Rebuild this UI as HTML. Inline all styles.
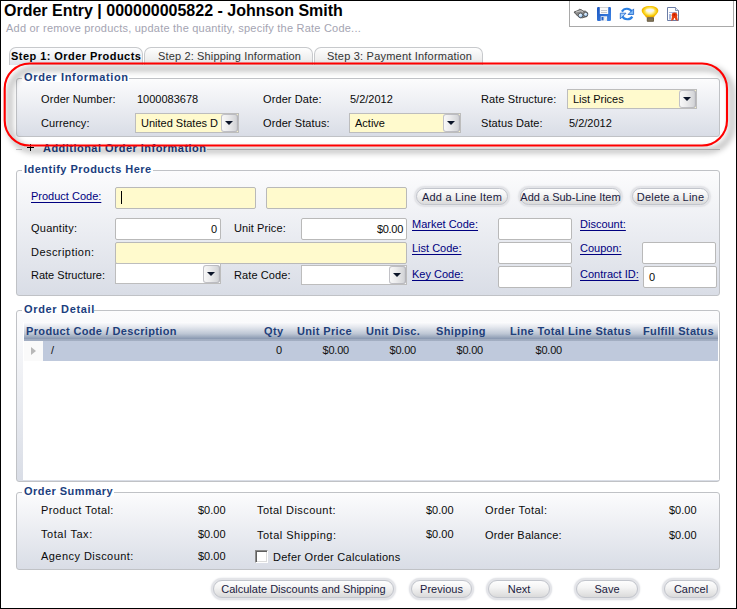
<!DOCTYPE html><html><head><meta charset="utf-8"><style>
*{margin:0;padding:0;box-sizing:border-box}
html,body{width:737px;height:609px;overflow:hidden;background:#fff}
body{position:relative;font-family:"Liberation Sans", sans-serif;font-size:11px;color:#000}
.frame{position:absolute;left:0;top:0;width:737px;height:609px;border:1px solid #000;z-index:50;pointer-events:none}
.t{position:absolute;white-space:nowrap;font-size:11px;line-height:13px;color:#0a0a0a;letter-spacing:0.1px}
.lk{position:absolute;white-space:nowrap;font-size:11px;line-height:13px;color:#000080;text-decoration:underline;text-underline-offset:2px}
.fs{position:absolute;border:1px solid #c0c2c6;border-radius:3px;background:linear-gradient(#fcfcfd,#d9dde6)}
.lgbg{position:absolute;background:#fff}
.lg{position:absolute;white-space:nowrap;font-size:11px;line-height:13px;font-weight:bold;color:#1b3e7e}
.in{position:absolute;border:1px solid #b9b9b9;border-radius:2px;overflow:hidden}
.in.cb{border-radius:0;border-color:#bdbdbd}
.ct{position:absolute;white-space:nowrap;font-size:11px;line-height:13px;color:#0a0a0a}
.cbtn{position:absolute;right:0;border-radius:3px;background:linear-gradient(90deg,#fafafa 0%,#ececed 40%,#d6d7da 85%,#c2c3c7 100%);box-shadow:inset 0 0 0 1px rgba(175,175,182,0.75)}
.tri{position:absolute;width:0;height:0;border-left:4px solid transparent;border-right:4px solid transparent;border-top:4.5px solid #0b1428}
.bt{position:absolute;border-radius:11px;background:#e3e4e8;box-shadow:0 0 1.5px 0.5px #ecedf0}
.bti{position:absolute;left:2px;top:2px;right:2px;bottom:2px;border:1px solid #c2c5cc;border-radius:9px;background:linear-gradient(#fefefe 0%,#f4f4f4 40%,#e3e3e3 80%,#dadada 100%)}
.btt{position:absolute;width:100%;text-align:center;font-size:11px;line-height:13px;color:#1b1b40;white-space:nowrap}
.gh{position:absolute;white-space:nowrap;font-size:11px;line-height:13px;font-weight:bold;color:#1f3f7a;letter-spacing:0.35px}
.gd{position:absolute;white-space:nowrap;font-size:11px;line-height:13px;color:#111;text-align:right;letter-spacing:-0.2px}
.tab{position:absolute;border:1px solid #c7c9cc;border-bottom:none;border-radius:7px 7px 0 0;background:linear-gradient(#fefefe,#e6e6e6);font-size:11px;line-height:13px;white-space:nowrap;color:#333}
</style></head><body>
<div class="frame"></div>
<div style="position:absolute;left:4px;top:2px;font-size:16px;line-height:18px;font-weight:bold;color:#000;white-space:nowrap">Order Entry | 000000005822 - Johnson Smith</div>
<div style="position:absolute;left:6px;top:22px;font-size:11px;line-height:13px;color:#a4a4b2;white-space:nowrap;letter-spacing:0.22px">Add or remove products, update the quantity, specify the Rate Code...</div>
<div style="position:absolute;left:569px;top:-1px;width:165px;height:28px;border:1px solid #a9a9a9"></div>
<div class="tab" style="left:9px;top:47px;width:134px;height:18px;background:linear-gradient(#fdfdfe,#dfe4ec)"><div style="position:absolute;left:1px;top:2px;font-weight:bold;color:#000;letter-spacing:0.45px">Step 1: Order Products</div></div>
<div class="tab" style="left:144px;top:47px;width:169px;height:18px"><div style="position:absolute;left:13px;top:2px;color:#333;letter-spacing:0.15px">Step 2: Shipping Information</div></div>
<div class="tab" style="left:314px;top:47px;width:169px;height:18px"><div style="position:absolute;left:12px;top:2px;color:#333;letter-spacing:0.21px">Step 3: Payment Information</div></div>
<div class="fs" style="left:16px;top:78px;width:704px;height:59px;"></div>
<div class="lgbg" style="left:22px;top:74px;width:107px;height:8px"></div>
<div class="lg" style="left:24px;top:71px;letter-spacing:0.66px">Order Information</div>
<div class="t" style="left:41px;top:93px;">Order Number:</div>
<div class="t" style="left:137px;top:93px;letter-spacing:0">1000083678</div>
<div class="t" style="left:263px;top:93px;">Order Date:</div>
<div class="t" style="left:350px;top:93px;letter-spacing:0">5/2/2012</div>
<div class="t" style="left:481px;top:93px;">Rate Structure:</div>
<div class="in cb" style="left:567px;top:89px;width:130px;height:20px;background:#fffacd"><div class="ct" style="left:5px;top:3px">List Prices</div><div class="cbtn" style="top:0px;width:17px;height:18px"><div class="tri" style="left:4px;top:7px"></div></div></div>
<div class="t" style="left:41px;top:117px;">Currency:</div>
<div class="in cb" style="left:135px;top:113px;width:104px;height:20px;background:#fffacd"><div class="ct" style="left:5px;top:3px">United States D</div><div class="cbtn" style="top:0px;width:17px;height:18px"><div class="tri" style="left:4px;top:7px"></div></div></div>
<div class="t" style="left:263px;top:117px;">Order Status:</div>
<div class="in cb" style="left:349px;top:113px;width:112px;height:20px;background:#fffacd"><div class="ct" style="left:5px;top:3px">Active</div><div class="cbtn" style="top:0px;width:17px;height:18px"><div class="tri" style="left:4px;top:7px"></div></div></div>
<div class="t" style="left:481px;top:117px;">Status Date:</div>
<div class="t" style="left:569px;top:117px;letter-spacing:0">5/2/2012</div>
<div style="position:absolute;left:16px;top:149px;width:704px;height:1px;background:#c9cacd"></div>
<div style="position:absolute;left:22px;top:143px;width:185px;height:12px;background:#fff"></div>
<div style="position:absolute;left:27px;top:147px;width:7px;height:1px;background:#000"></div><div style="position:absolute;left:30px;top:144px;width:1px;height:7px;background:#000"></div>
<div class="lg" style="left:43px;top:142px;letter-spacing:0.47px">Additional Order Information</div>
<div class="fs" style="left:16px;top:170px;width:704px;height:126px;"></div>
<div class="lgbg" style="left:22px;top:166px;width:131px;height:8px"></div>
<div class="lg" style="left:24px;top:163px;letter-spacing:0.47px">Identify Products Here</div>
<div class="lk" style="left:31px;top:190px;">Product Code:</div>
<div class="in" style="left:115px;top:187px;width:141px;height:22px;background:#fffacd;"><div style="position:absolute;left:5px;top:3px;width:1px;height:13px;background:#000"></div></div>
<div class="in" style="left:266px;top:187px;width:141px;height:22px;background:#fffacd;"></div>
<div class="bt" style="left:414px;top:186px;width:96px;height:21px"><div class="bti"></div><div class="btt" style="top:5px;left:0px;letter-spacing:0.2px">Add a Line Item</div></div>
<div class="bt" style="left:518px;top:186px;width:105px;height:21px"><div class="bti"></div><div class="btt" style="top:5px;left:0px;letter-spacing:0px">Add a Sub-Line Item</div></div>
<div class="bt" style="left:630px;top:186px;width:81px;height:21px"><div class="bti"></div><div class="btt" style="top:5px;left:0px;letter-spacing:0.2px">Delete a Line</div></div>
<div class="t" style="left:31px;top:222px;letter-spacing:0.24px">Quantity:</div>
<div class="in" style="left:115px;top:218px;width:106px;height:22px;background:#fff;"><div class="ct" style="right:3px;top:4px">0</div></div>
<div class="t" style="left:234px;top:222px;">Unit Price:</div>
<div class="in" style="left:301px;top:218px;width:106px;height:22px;background:#fff;"><div class="ct" style="right:3px;top:4px;letter-spacing:-0.3px">$0.00</div></div>
<div class="lk" style="left:412px;top:218px;">Market Code:</div>
<div class="in" style="left:498px;top:218px;width:74px;height:22px;background:#fff;"></div>
<div class="lk" style="left:580px;top:218px;">Discount:</div>
<div class="t" style="left:31px;top:246px;letter-spacing:0.45px">Description:</div>
<div class="in" style="left:115px;top:242px;width:292px;height:22px;background:#fffacd;"></div>
<div class="lk" style="left:412px;top:242px;">List Code:</div>
<div class="in" style="left:498px;top:242px;width:74px;height:22px;background:#fff;"></div>
<div class="lk" style="left:580px;top:242px;">Coupon:</div>
<div class="in" style="left:642px;top:242px;width:74px;height:22px;background:#fff;"></div>
<div class="t" style="left:31px;top:269px;letter-spacing:0">Rate Structure:</div>
<div class="in cb" style="left:115px;top:263px;width:106px;height:21px;background:#fff"><div class="cbtn" style="top:1px;width:17px;height:18px"><div class="tri" style="left:4px;top:7px"></div></div></div>
<div class="t" style="left:234px;top:269px;">Rate Code:</div>
<div class="in cb" style="left:301px;top:265px;width:106px;height:20px;background:#fff"><div class="cbtn" style="top:0px;width:17px;height:18px"><div class="tri" style="left:4px;top:7px"></div></div></div>
<div class="lk" style="left:412px;top:268px;">Key Code:</div>
<div class="in" style="left:498px;top:266px;width:74px;height:22px;background:#fff;"></div>
<div class="lk" style="left:580px;top:268px;">Contract ID:</div>
<div class="in" style="left:643px;top:266px;width:74px;height:22px;background:#fff;"><div class="ct" style="left:5px;top:4px">0</div></div>
<div class="fs" style="left:16px;top:310px;width:704px;height:172px;"></div>
<div class="lgbg" style="left:22px;top:306px;width:72px;height:8px"></div>
<div class="lg" style="left:24px;top:303px;letter-spacing:0.67px">Order Detail</div>
<div style="position:absolute;left:23px;top:322px;width:696px;height:158px;background:#fff"></div>
<div style="position:absolute;left:24px;top:322px;width:694px;height:19px;background:linear-gradient(#fdfdfe 0%,#e6e9ef 25%,#bdc6d4 62%,#8a99b1 88%,#9fabbf 88%,#a3aec2 100%)"></div>
<div style="position:absolute;left:24px;top:341px;width:694px;height:20px;background:#bfc9dc"></div>
<div style="position:absolute;left:24px;top:341px;width:19px;height:20px;background:#fafafa"></div>
<div class="gh" style="left:26px;top:325px">Product Code / Description</div>
<div class="gh" style="left:264px;top:325px">Qty</div>
<div class="gh" style="left:297px;top:325px">Unit Price</div>
<div class="gh" style="left:366px;top:325px">Unit Disc.</div>
<div class="gh" style="left:436px;top:325px">Shipping</div>
<div class="gh" style="left:510px;top:325px">Line Total</div>
<div class="gh" style="left:568px;top:325px">Line Status</div>
<div class="gh" style="left:643px;top:325px">Fulfill Status</div>
<div style="position:absolute;left:31px;top:347px;width:0;height:0;border-top:4.5px solid transparent;border-bottom:4.5px solid transparent;border-left:5px solid #b8b8b8"></div>
<div class="gd" style="left:51px;width:20px;text-align:left;top:344px">/</div>
<div class="gd" style="left:222px;width:60px;top:344px">0</div>
<div class="gd" style="left:289px;width:60px;top:344px">$0.00</div>
<div class="gd" style="left:356px;width:60px;top:344px">$0.00</div>
<div class="gd" style="left:423px;width:60px;top:344px">$0.00</div>
<div class="gd" style="left:502px;width:60px;top:344px">$0.00</div>
<div class="fs" style="left:16px;top:492px;width:704px;height:78px;"></div>
<div class="lgbg" style="left:22px;top:488px;width:92px;height:8px"></div>
<div class="lg" style="left:24px;top:485px;letter-spacing:0.45px">Order Summary</div>
<div class="t" style="left:41px;top:504px;letter-spacing:0.41px">Product Total:</div>
<div class="t" style="left:198px;top:504px;letter-spacing:0">$0.00</div>
<div class="t" style="left:257px;top:504px;letter-spacing:0.45px">Total Discount:</div>
<div class="t" style="left:426px;top:504px;letter-spacing:0">$0.00</div>
<div class="t" style="left:485px;top:504px;letter-spacing:0.43px">Order Total:</div>
<div class="t" style="left:669px;top:504px;letter-spacing:0">$0.00</div>
<div class="t" style="left:41px;top:528px;letter-spacing:0.55px">Total Tax:</div>
<div class="t" style="left:198px;top:528px;letter-spacing:0">$0.00</div>
<div class="t" style="left:257px;top:529px;letter-spacing:0.49px">Total Shipping:</div>
<div class="t" style="left:426px;top:528px;letter-spacing:0">$0.00</div>
<div class="t" style="left:485px;top:529px;letter-spacing:0.2px">Order Balance:</div>
<div class="t" style="left:669px;top:529px;letter-spacing:0">$0.00</div>
<div class="t" style="left:41px;top:550px;letter-spacing:0.45px">Agency Discount:</div>
<div class="t" style="left:198px;top:550px;letter-spacing:0">$0.00</div>
<div style="position:absolute;left:255px;top:550px;width:13px;height:13px;border-top:1px solid #8c8c8c;border-left:1px solid #8c8c8c;border-bottom:1px solid #ffffff;border-right:1px solid #ffffff;box-shadow:inset 1px 1px 0 #5f5f5f,inset -1px -1px 0 #dcdcdc;background:#fff"></div>
<div class="t" style="left:273px;top:551px;letter-spacing:0.27px">Defer Order Calculations</div>
<div class="bt" style="left:211px;top:578px;width:185px;height:22px"><div class="bti"></div><div class="btt" style="top:5px;left:0px;letter-spacing:0px">Calculate Discounts and Shipping</div></div>
<div class="bt" style="left:409px;top:578px;width:65px;height:22px"><div class="bti"></div><div class="btt" style="top:5px;left:0px;letter-spacing:0px">Previous</div></div>
<div class="bt" style="left:486px;top:578px;width:66px;height:22px"><div class="bti"></div><div class="btt" style="top:5px;left:0px;letter-spacing:0px">Next</div></div>
<div class="bt" style="left:574px;top:578px;width:66px;height:22px"><div class="bti"></div><div class="btt" style="top:5px;left:0px;letter-spacing:0px">Save</div></div>
<div class="bt" style="left:662px;top:578px;width:58px;height:22px"><div class="bti"></div><div class="btt" style="top:5px;left:0px;letter-spacing:0px">Cancel</div></div>
<svg style="position:absolute;left:0;top:0;z-index:5" width="737" height="30" viewBox="0 0 737 30">
<defs>
<radialGradient id="bulbg" cx="0.5" cy="0.45" r="0.6"><stop offset="0" stop-color="#ffffff"/><stop offset="0.35" stop-color="#fff3a0"/><stop offset="0.7" stop-color="#f7c800"/><stop offset="1" stop-color="#e58a00"/></radialGradient>
<radialGradient id="lens" cx="0.35" cy="0.3" r="0.8"><stop offset="0" stop-color="#f4faff"/><stop offset="1" stop-color="#7fb6ee"/></radialGradient>
<linearGradient id="flg" x1="0" y1="0" x2="1" y2="1"><stop offset="0" stop-color="#1a55c0"/><stop offset="1" stop-color="#3f86e6"/></linearGradient>
</defs>
<g>
<path d="M574 12 L578 10.5 L579.5 9.3 L581.5 9.8 L583 11 L585.5 11.2 L587.8 13 L587 16.5 L582.5 17.8 L580 17.8 L576 14.5 Z" fill="#8a8a8a" stroke="#3a3a3a" stroke-width="0.7"/>
<path d="M576 12 L581 10.8 L583 12" stroke="#d0d0d0" stroke-width="0.9" fill="none"/>
<circle cx="580.6" cy="15.4" r="2.3" fill="url(#lens)" stroke="#3c3c3c" stroke-width="0.7"/>
<circle cx="585.7" cy="14.4" r="2.1" fill="url(#lens)" stroke="#3c3c3c" stroke-width="0.7"/>
</g>
<g>
<rect x="597" y="7" width="14" height="14" rx="1.2" fill="url(#flg)"/>
<rect x="599.8" y="7" width="8.4" height="7" fill="#fbfbfb"/>
<rect x="599.8" y="7" width="8.4" height="1" fill="#d4d4d4"/>
<rect x="601" y="10" width="6" height="1" fill="#c4c6ca"/>
<rect x="601" y="12" width="6" height="1" fill="#c4c6ca"/>
<rect x="600.7" y="16.2" width="6.4" height="4.8" fill="#e4e8ee"/>
<rect x="601.5" y="17" width="2" height="3.3" fill="#1f5fc6"/>
<path d="M604.5 20.5 L606.5 17" stroke="#ffffff" stroke-width="0.8"/>
</g>
<g fill="none" stroke="#2a7fe2" stroke-width="2.2">
<path d="M621.9 11.6 A5.8 5.8 0 0 1 632 11.8"/>
<path d="M632.3 16.6 A5.8 5.8 0 0 1 622.3 16.2"/>
</g>
<path d="M628 14.5 L633.6 14.5 L633.6 8.9 Z" fill="#7db9f5" stroke="#1a62cc" stroke-width="0.8"/>
<path d="M620.3 13.2 L626 13.2 L620.3 18.9 Z" fill="#a9d3fb" stroke="#1a62cc" stroke-width="0.8"/>
<g>
<path d="M650 6 C655 6 658.3 8 658.3 10.5 C658.3 13.5 655 15 654 17.5 L646 17.5 C645 15 641.7 13.5 641.7 10.5 C641.7 8 645 6 650 6 Z" fill="url(#bulbg)"/>
<ellipse cx="650" cy="10.5" rx="4.3" ry="1.4" fill="#f4f4ff" opacity="0.85"/>
<rect x="646.8" y="17.2" width="7.2" height="4.6" rx="0.8" fill="#5e5036"/>
<rect x="647.3" y="18.6" width="6.2" height="0.9" fill="#a49878"/>
<rect x="647.3" y="20.2" width="6.2" height="0.7" fill="#8a7e60"/>
</g>
<g>
<path d="M667.5 7.5 L675.5 7.5 L678.5 10.5 L678.5 20.5 L667.5 20.5 Z" fill="#ffffff" stroke="#6b7da6" stroke-width="1"/>
<path d="M675.5 7.5 L675.5 10.5 L678.5 10.5" fill="#dfe5f0" stroke="#6b7da6" stroke-width="0.8"/>
<rect x="669" y="12" width="8" height="0.8" fill="#8fa6d8"/>
<rect x="669" y="14" width="2" height="5.5" fill="#a9b9de"/>
<circle cx="674.5" cy="15.2" r="2.8" fill="#e8380c"/>
<path d="M672 16.5 L671 20.8 L673.5 20 L674.5 17 Z M677 16.5 L678 20.8 L675.5 20 L674.5 17 Z" fill="#e84010"/>
<circle cx="674.3" cy="14.8" r="1" fill="#b81e00"/>
</g>
</svg>
<svg style="position:absolute;left:0;top:0;z-index:40;pointer-events:none" width="737" height="609" viewBox="0 0 737 609">
<defs><filter id="sh" x="-10%" y="-50%" width="120%" height="200%"><feGaussianBlur stdDeviation="3"/></filter></defs>
<rect x="9.7" y="68.5" width="722.3" height="82" rx="25" ry="25" fill="none" stroke="#000" stroke-opacity="0.45" stroke-width="3" filter="url(#sh)"/>
<rect x="4.7" y="63.5" width="722.3" height="82" rx="25" ry="25" fill="none" stroke="#ff0000" stroke-width="2.1"/>
</svg>
</body></html>
